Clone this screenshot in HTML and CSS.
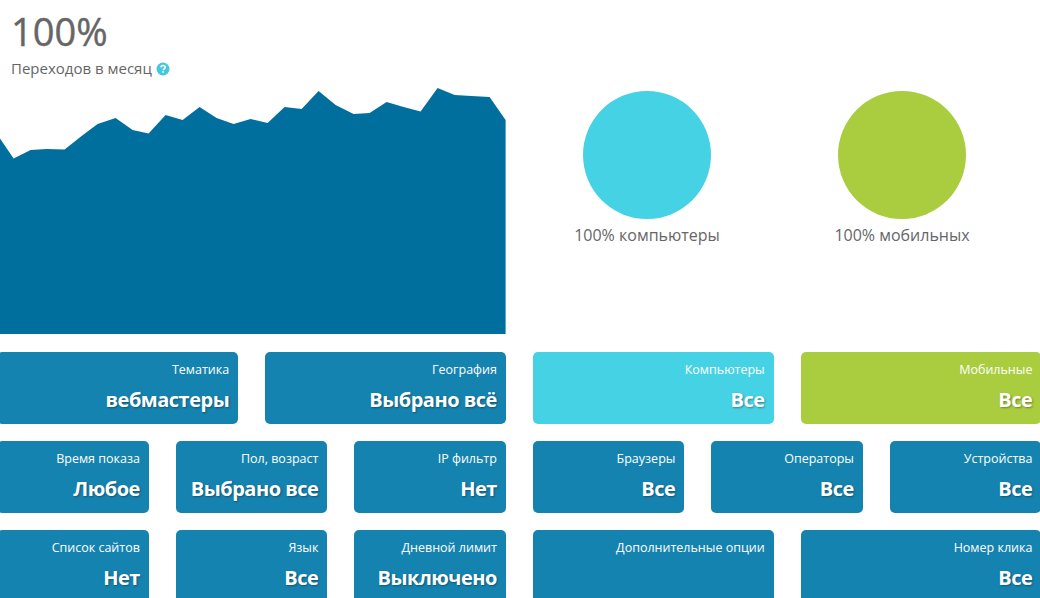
FILE: index.html
```html
<!DOCTYPE html>
<html lang="ru">
<head>
<meta charset="utf-8">
<title>Статистика</title>
<link rel="stylesheet" href="styles.css">
</head>
<body>
<main class="board">
  <section class="traffic">
    <div class="percent">100%</div>
    <div class="caption">Переходов в месяц
      <svg class="help" viewBox="0 0 14 14" width="14" height="14" aria-hidden="true">
        <circle cx="7" cy="7" r="6.5" fill="#45c8de"/>
        <path d="M4.9 5.4C5 4.2 5.9 3.5 7.1 3.5c1.2 0 2.1.7 2.1 1.8 0 .9-.5 1.3-1.1 1.7-.5.3-.8.6-.8 1.2" fill="none" stroke="#fff" stroke-width="1.5"/>
        <rect x="6.3" y="9.2" width="1.6" height="1.6" fill="#fff"/>
      </svg>
    </div>
    <svg class="chart" viewBox="-2.6 0 508.6 248" width="508.6" height="248" aria-hidden="true">
      <polygon fill="#006f9d" points="-3,48 0,52 14,72.5 31,64 47,63 65,63.5 82,50 98,38 116,32 133,44 149,47.5 166,29 183,34 200,21 217,32 234,38 251,33 268,37 285,21 302,23 319,5 336,19 354,28 370,27 387,16 404,21 421,25.5 438,2 455,9 472,10 490,11 506,34 506,248 -3,248"/>
    </svg>
  </section>
  <section class="devices">
    <figure class="device">
      <div class="disc disc-cyan"></div>
      <figcaption>100% компьютеры</figcaption>
    </figure>
    <figure class="device">
      <div class="disc disc-green"></div>
      <figcaption>100% мобильных</figcaption>
    </figure>
  </section>

  <a class="tile wide"><span class="label">Тематика</span><strong class="value">вебмастеры</strong></a>
  <a class="tile wide"><span class="label">География</span><strong class="value">Выбрано всё</strong></a>
  <a class="tile wide cyan"><span class="label">Компьютеры</span><strong class="value">Все</strong></a>
  <a class="tile wide green"><span class="label">Мобильные</span><strong class="value">Все</strong></a>

  <a class="tile"><span class="label">Время показа</span><strong class="value">Любое</strong></a>
  <a class="tile"><span class="label">Пол, возраст</span><strong class="value">Выбрано все</strong></a>
  <a class="tile"><span class="label">IP фильтр</span><strong class="value">Нет</strong></a>
  <a class="tile"><span class="label">Браузеры</span><strong class="value">Все</strong></a>
  <a class="tile"><span class="label">Операторы</span><strong class="value">Все</strong></a>
  <a class="tile"><span class="label">Устройства</span><strong class="value">Все</strong></a>

  <a class="tile"><span class="label">Список сайтов</span><strong class="value">Нет</strong></a>
  <a class="tile"><span class="label">Язык</span><strong class="value">Все</strong></a>
  <a class="tile"><span class="label">Дневной лимит</span><strong class="value">Выключено</strong></a>
  <a class="tile wide"><span class="label">Дополнительные опции</span></a>
  <a class="tile wide"><span class="label">Номер клика</span><strong class="value">Все</strong></a>
</main>
</body>
</html>
```
FILE: styles.css
```css
html, body {
  margin: 0;
  height: 598px;
  overflow: hidden;
  background: #fff;
}

body {
  font-family: "Open Sans", "Liberation Sans", sans-serif;
  color: #666;
}

.board {
  display: grid;
  grid-template-columns: repeat(12, 1fr);
  column-gap: 27px;
  row-gap: 17px;
  width: 1044px;
  margin: 0 0 0 -2.6px;
}

.traffic {
  grid-column: span 6;
  margin-bottom: 1px;
}

.percent {
  padding: 8px 0 0 13.6px;
  font-size: 38px;
  line-height: 46px;
  font-weight: 500;
  -webkit-text-stroke: 0.4px #666;
}

.caption {
  display: flex;
  align-items: center;
  gap: 4px;
  padding: 5px 0 0 13.6px;
  font-size: 15px;
  line-height: 19px;
}

.help {
  display: block;
}

.chart {
  display: block;
  margin-top: 8px;
}

.devices {
  grid-column: span 6;
  display: grid;
  grid-template-columns: 255px 255px;
  margin-left: -13.4px;
  padding-top: 91px;
}

.device {
  margin: 0;
  display: flex;
  flex-direction: column;
  align-items: center;
}

.device figcaption {
  margin-top: 5px;
  font-size: 16px;
  line-height: 22px;
}

.disc {
  width: 128px;
  height: 128px;
  border-radius: 50%;
}

.disc-cyan {
  background: #45d2e4;
}

.disc-green {
  background: #aacd3f;
}

.tile {
  grid-column: span 2;
  display: flex;
  flex-direction: column;
  align-items: flex-end;
  height: 72px;
  padding: 9px 9px 0;
  box-sizing: border-box;
  border-radius: 5px;
  background: #1583af;
  color: #fff;
  text-align: right;
}

.tile.wide {
  grid-column: span 3;
}

.tile.cyan {
  background: #45d2e4;
}

.tile.green {
  background: #aacd3f;
}

.label {
  font-size: 12.5px;
  line-height: 18px;
  white-space: nowrap;
}

.value {
  margin-top: 7px;
  font-size: 20px;
  line-height: 28px;
  font-weight: 700;
  letter-spacing: -0.5px;
  white-space: nowrap;
  text-shadow: 1px 1px 2px rgba(0, 0, 0, 0.35);
}
```
